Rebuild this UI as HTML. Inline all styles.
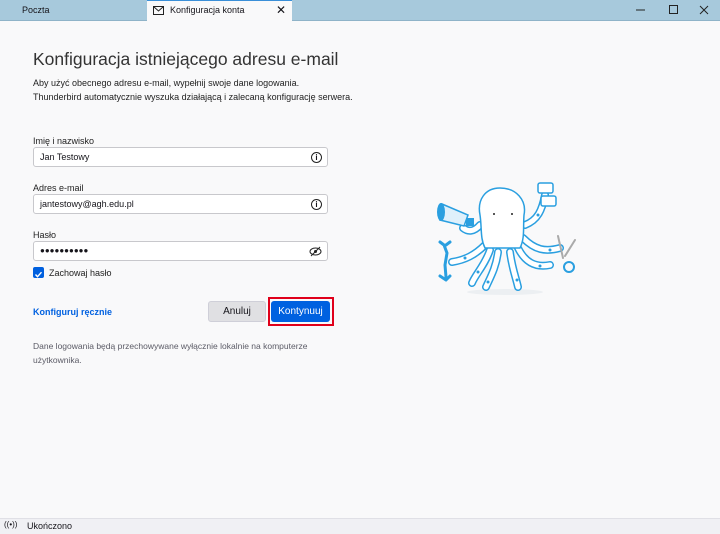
<!DOCTYPE html>
<html><head><meta charset="utf-8"><style>
*{margin:0;padding:0;box-sizing:border-box}
body{width:720px;height:534px;overflow:hidden;background:#f9f9fa;font-family:"Liberation Sans",sans-serif;color:#15141a;position:relative}
.tb{position:absolute;left:0;top:0;width:720px;height:21px;background:#a7c9dc;border-bottom:1px solid #8fb3c8}
.tab1{position:absolute;left:22px;top:5px;font-size:9px}
.tab2{position:absolute;left:147px;top:0;width:145px;height:21px;background:#f9f9fa;border-top:1px solid #3a8fd8}
.tab2 span{position:absolute;left:23px;top:4px;font-size:9px}
.ab{position:absolute;font-size:11px}
h1{position:absolute;left:33px;top:49px;font-size:17.5px;font-weight:normal;color:#333}
.p{position:absolute;left:33px;font-size:9px;color:#222}
.lbl{position:absolute;left:33px;font-size:9px;color:#222}
.in{position:absolute;left:33px;width:295px;height:20px;background:#fff;border:1px solid #c8c8cc;border-radius:3px;font-size:9px;padding:4px 6px}
.ic{position:absolute;right:5px;top:4px;width:11px;height:11px;border:1.3px solid #222;border-radius:50%;font-size:8px;font-weight:bold;text-align:center;line-height:9px}
.btn{position:absolute;top:301px;height:21px;border-radius:3px;font-size:10px;text-align:center;line-height:21px}
</style></head><body>
<div class="tb"></div>
<div class="tab1">Poczta</div>
<div class="tab2"><svg style="position:absolute;left:6px;top:5px" width="11" height="10"><rect x="0.5" y="0.5" width="10" height="8" fill="none" stroke="#222"/><path d="M0.5 0.5L5.5 5L10.5 0.5" fill="none" stroke="#222"/></svg><span>Konfiguracja konta</span><span style="left:129px;top:2px;font-size:12px">✕</span></div>
<svg style="position:absolute;left:630px;top:4px" width="85" height="12"><path d="M6 6h9" stroke="#222"/><rect x="39.5" y="1.5" width="8" height="8" fill="none" stroke="#222"/><path d="M70 2l8 8M78 2l-8 8" stroke="#222"/></svg>
<h1>Konfiguracja istniejącego adresu e-mail</h1>
<div class="p" style="top:78px">Aby użyć obecnego adresu e-mail, wypełnij swoje dane logowania.</div>
<div class="p" style="top:92px">Thunderbird automatycznie wyszuka działającą i zalecaną konfigurację serwera.</div>
<div class="lbl" style="top:136px">Imię i nazwisko</div>
<div class="in" style="top:147px">Jan Testowy<div class="ic">i</div></div>
<div class="lbl" style="top:183px">Adres e-mail</div>
<div class="in" style="top:194px">jantestowy@agh.edu.pl<div class="ic">i</div></div>
<div class="lbl" style="top:230px">Hasło</div>
<div class="in" style="top:241px;font-size:8px;letter-spacing:0px;padding-top:4px">●●●●●●●●●●<svg style="position:absolute;right:5px;top:4px" width="13" height="11"><ellipse cx="6.5" cy="5.5" rx="5.5" ry="3.5" fill="none" stroke="#222"/><circle cx="6.5" cy="5.5" r="1.5" fill="#222"/><path d="M2 10L11 1" stroke="#222"/></svg></div>
<div style="position:absolute;left:33px;top:267px;width:11px;height:11px;background:#0060df;border-radius:2px"><svg width="11" height="11"><path d="M2.5 5.5l2 2.2 4-4.5" fill="none" stroke="#fff" stroke-width="1.4"/></svg></div>
<div class="lbl" style="left:49px;top:268px">Zachowaj hasło</div>
<div class="lbl" style="top:307px;color:#0061e0;font-weight:bold">Konfiguruj ręcznie</div>
<div class="btn" style="left:208px;width:58px;background:#e0e0e3;border:1px solid #cfcfd8;line-height:19px">Anuluj</div>
<div style="position:absolute;left:268px;top:297px;width:66px;height:29px;border:2px solid #e0001a"></div>
<div class="btn" style="left:271px;width:59px;background:#0061e0;color:#fff">Kontynuuj</div>
<div class="p" style="top:341px;color:#5b5b66;font-size:8.5px">Dane logowania będą przechowywane wyłącznie lokalnie na komputerze</div>
<div class="p" style="top:355px;color:#5b5b66;font-size:8.5px">użytkownika.</div>
<svg style="position:absolute;left:430px;top:170px" width="150" height="125" fill="none" stroke-linecap="round">
<ellipse cx="75" cy="122" rx="38" ry="3" fill="#eceff2"/>
<g stroke="#2a9fe0" stroke-width="8">
<path d="M55 75C45 85 35 90 22 92M60 80C55 95 45 105 42 113M68 82C66 98 60 108 56 117M80 82C82 98 86 108 88 117M88 78C95 92 105 98 120 95M93 68C105 80 115 82 130 78M95 55C108 50 112 40 115 25M50 55C44 62 38 62 33 58"/>
</g>
<g stroke="#fff" stroke-width="5">
<path d="M55 75C45 85 35 90 22 92M60 80C55 95 45 105 42 113M68 82C66 98 60 108 56 117M80 82C82 98 86 108 88 117M88 78C95 92 105 98 120 95M93 68C105 80 115 82 130 78M95 55C108 50 112 40 115 25M50 55C44 62 38 62 33 58"/>
</g>
<path d="M70 18C55 18 47 30 50 45C52 58 50 68 55 78L90 78C95 68 93 58 94 45C97 30 86 18 70 18Z" fill="#fff" stroke="#2a9fe0" stroke-width="1.5"/>
<path d="M12 34L38 45L34 56L10 50Z" fill="#dff0fb" stroke="#2a9fe0" stroke-width="1.5"/>
<ellipse cx="11" cy="42" rx="4" ry="9" fill="#2a9fe0"/>
<rect x="36" y="48" width="8" height="8" fill="#2a9fe0"/>
<rect x="108" y="13" width="15" height="10" rx="2" fill="#fff" stroke="#2a9fe0" stroke-width="1.5"/>
<rect x="111" y="26" width="15" height="10" rx="2" fill="#fff" stroke="#2a9fe0" stroke-width="1.5"/>
<path d="M14 75l3 8-2 12 1 12M10 72l4 3M20 72l-4 3M10 106l6 4M20 106l-4 4" stroke="#2a9fe0" stroke-width="3" />
<path d="M133 88l-5-22M135 86l10-16" stroke="#aaa" stroke-width="2"/>
<circle cx="139" cy="97" r="5" stroke="#2a9fe0" stroke-width="2"/>
<circle cx="64" cy="44" r="1" fill="#222"/><circle cx="82" cy="44" r="1" fill="#222"/>
<g fill="#2a9fe0"><circle cx="35" cy="88" r="1.5"/><circle cx="48" cy="102" r="1.5"/><circle cx="110" cy="96" r="1.5"/><circle cx="120" cy="80" r="1.5"/><circle cx="108" cy="45" r="1.5"/><circle cx="87" cy="110" r="1.5"/><circle cx="58" cy="112" r="1.5"/></g>
</svg>
<div style="position:absolute;left:0;top:518px;width:720px;height:16px;background:#f0f0f4;border-top:1px solid #e0e0e6"></div>
<div class="ab" style="left:4px;top:520px;font-size:8px">((•))</div>
<div class="ab" style="left:27px;top:521px;font-size:9px">Ukończono</div>
</body></html>
